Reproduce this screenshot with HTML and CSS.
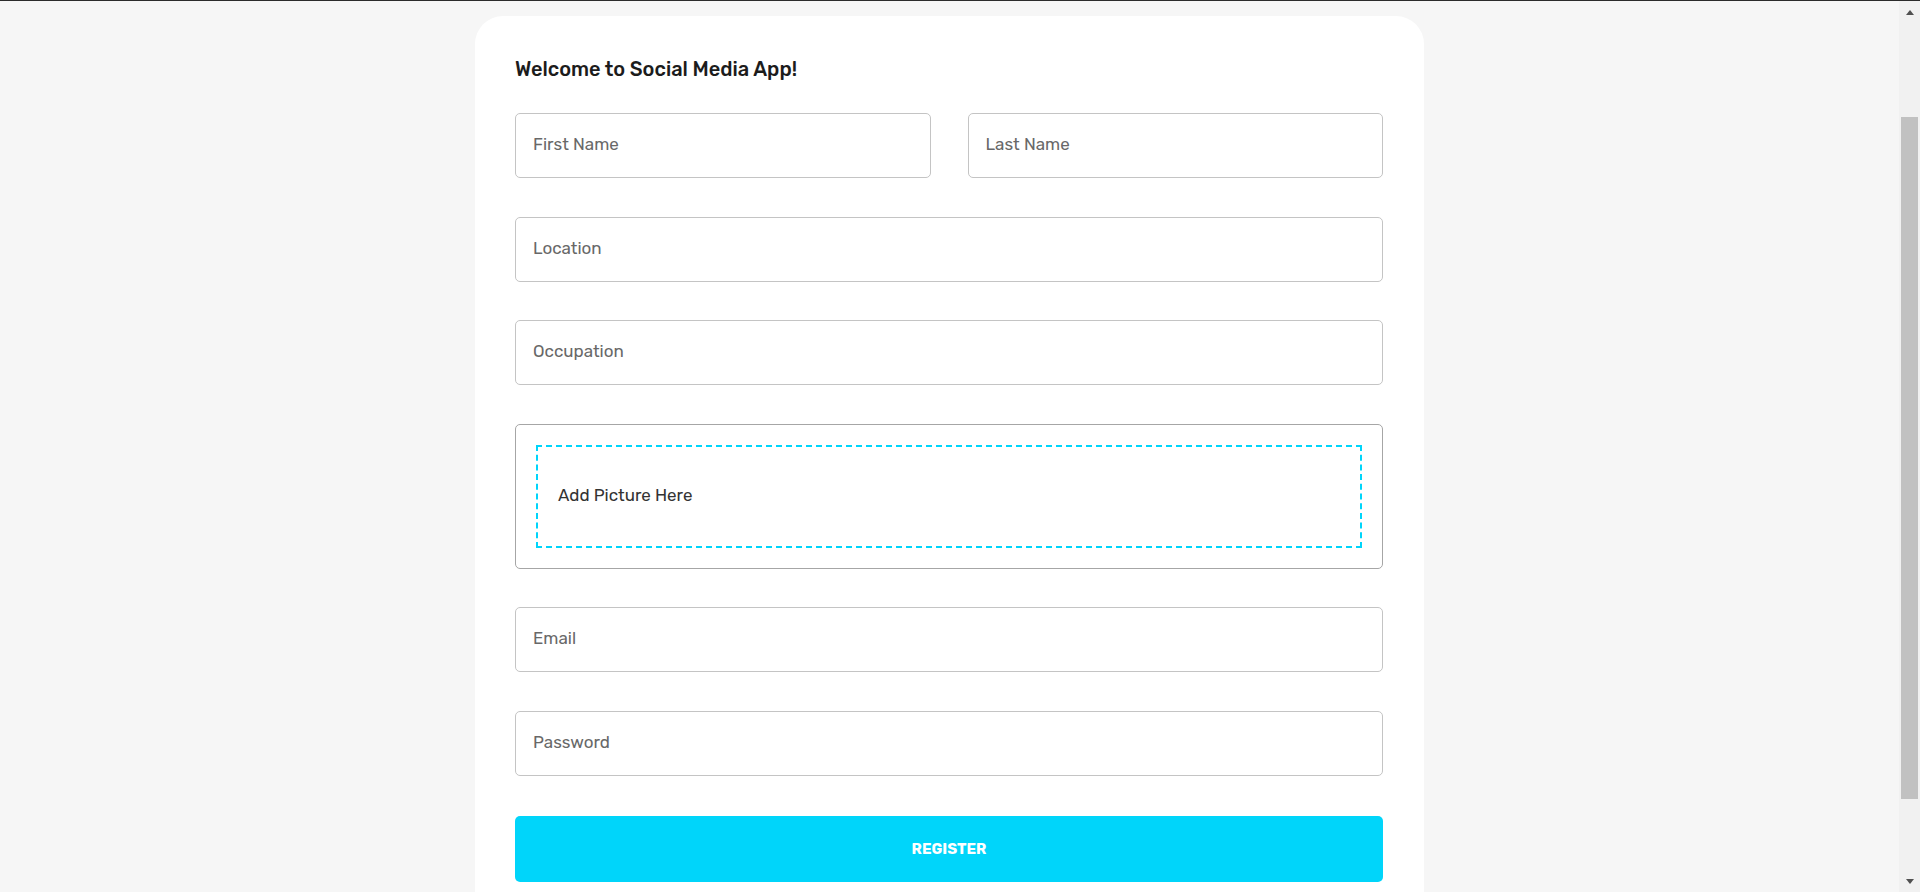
FILE: index.html
```html
<!DOCTYPE html>
<html lang="en">
<head>
<meta charset="utf-8">
<title>Register</title>
<link rel="stylesheet" href="styles.css">
</head>
<body>
  <div class="topline"></div>
  <div class="viewport">
    <main class="page">
      <section class="card">
        <h1 class="title">Welcome to Social Media App!</h1>
        <form class="form">
          <input class="field" type="text" placeholder="First Name">
          <input class="field" type="text" placeholder="Last Name">
          <input class="field wide" type="text" placeholder="Location">
          <input class="field wide" type="text" placeholder="Occupation">
          <div class="dropbox wide">
            <div class="dropzone">Add Picture Here</div>
          </div>
          <input class="field wide" type="email" placeholder="Email">
          <input class="field wide" type="password" placeholder="Password">
          <button class="submit wide" type="button">Register</button>
        </form>
      </section>
    </main>
    <div class="scrollbar">
      <div class="sb-btn"><span class="arrow-up"></span></div>
      <div class="sb-track">
        <div class="sb-space"></div>
        <div class="sb-thumb"></div>
      </div>
      <div class="sb-btn sb-btn-down"><span class="arrow-down"></span></div>
    </div>
  </div>
</body>
</html>
```

FILE: styles.css
```css
* { box-sizing: border-box; }

html, body {
  margin: 0;
  height: 892px;
  overflow: hidden;
}

body {
  background: #f6f6f6;
  font-family: "Rubik", "Open Sans", "Liberation Sans", sans-serif;
  color: #222;
}

.topline {
  height: 1px;
  background: #2b2b2b;
}

.viewport {
  display: flex;
  height: 891px;
}

.page {
  flex: 1;
  display: flex;
  justify-content: center;
  padding-top: 15px;
  overflow: hidden;
}

.card {
  width: 949px;
  background: #ffffff;
  border-radius: 28px;
  padding: 41px 41px 120px 40px;
  align-self: flex-start;
}

.title {
  margin: 0 0 32px 0;
  font-size: 20px;
  line-height: 24px;
  font-weight: 500;
  color: #1c1c1c;
}

.form {
  display: grid;
  grid-template-columns: 1fr 1fr;
  column-gap: 37px;
  row-gap: 38.5px;
}

.wide { grid-column: 1 / span 2; }

.field {
  height: 65px;
  border: 1px solid #c4c4c4;
  border-radius: 5px;
  padding: 0 17px 3px 17px;
  font-family: inherit;
  font-size: 17px;
  color: #222;
  background: #fff;
  outline: none;
}

.field::placeholder {
  color: #686868;
  opacity: 1;
}

.dropbox {
  height: 145px;
  border: 1px solid #a6a6a6;
  border-radius: 5px;
  padding: 20px;
}

.dropzone {
  height: 103px;
  border: 2px dashed #00d5fa;
  padding: 0 20px 2px 20px;
  display: flex;
  align-items: center;
  font-size: 17px;
  color: #333;
}

.submit {
  margin-top: 2px;
  height: 66px;
  border: none;
  border-radius: 5px;
  background: #00d5fa;
  color: #ffffff;
  font-family: inherit;
  font-weight: 700;
  font-size: 15px;
  text-transform: uppercase;
}

.scrollbar {
  width: 21px;
  background: #f1f1f1;
  display: flex;
  flex-direction: column;
}

.sb-btn {
  height: 23px;
  display: flex;
  align-items: center;
  justify-content: center;
}

.sb-btn-down { height: 22px; }

.arrow-up {
  width: 0;
  height: 0;
  border-left: 4.5px solid transparent;
  border-right: 4.5px solid transparent;
  border-bottom: 5px solid #505050;
}

.arrow-down {
  width: 0;
  height: 0;
  border-left: 4.5px solid transparent;
  border-right: 4.5px solid transparent;
  border-top: 5px solid #505050;
}

.sb-track {
  flex: 1;
  display: flex;
  flex-direction: column;
}

.sb-space { height: 93px; }

.sb-thumb {
  height: 682px;
  margin: 0 2px;
  background: #c1c1c1;
}
```
